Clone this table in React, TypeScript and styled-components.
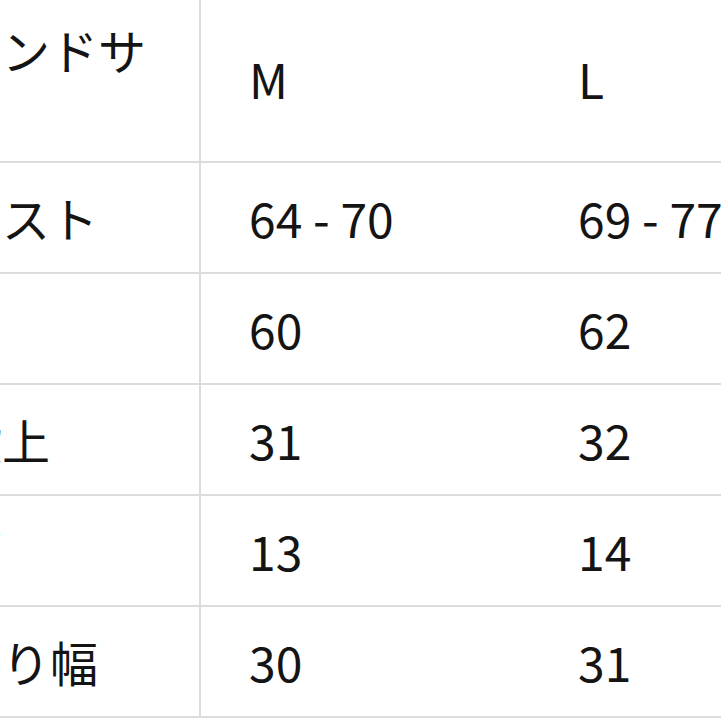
import React from 'react';
import styled, { createGlobalStyle } from 'styled-components';


const GlobalStyle = createGlobalStyle`
    html, body {
        margin: 0;
        padding: 0;
        background: #ffffff;
    }
`;

const Page = styled.div`
    width: 721px;
    height: 721px;
    overflow: hidden;
    background: #ffffff;
    font-family: "Noto Sans CJK JP", "Noto Sans", sans-serif;
    color: #141414;
`;

// the size chart is wider than the window: its first column starts off to the left
const Table = styled.div`
    display: grid;
    grid-template-columns: 322px 329px 329px;
    margin-left: -121px;
    margin-top: -5px;
    width: max-content;
`;

const Cell = styled.div<{ $label ?: boolean }>`
    font-size: 48px;
    line-height: 57px;
    padding: 26px ${p => p.$label ? '25px' : '20px'} 26px ${p => p.$label ? '27px' : '48px'};
    border-bottom: 2px solid #dcdcdc;
    border-right: ${p => p.$label ? '2px solid #dcdcdc' : 'none'};
    display: flex;
    align-items: center;
    white-space: ${p => p.$label ? 'normal' : 'nowrap'};
    word-break: break-all;
`;


interface IRow
{
    label : string;
    m : string;
    l : string;
}

const header : IRow = { label: 'ブランドサイズ', m: 'M', l: 'L' };

const rows : IRow[] = [
    { label: 'ウエスト', m: '64 - 70', l: '69 - 77' },
    { label: '総丈', m: '60', l: '62' },
    { label: '前股上', m: '31', l: '32' },
    { label: '裾幅', m: '13', l: '14' },
    { label: 'わたり幅', m: '30', l: '31' },
];


export default function App() : JSX.Element
{
    return (
        <Page>
            <GlobalStyle />
            <Table>
                {[header, ...rows].map(row => (
                    <React.Fragment key={row.label}>
                        <Cell $label>{row.label}</Cell>
                        <Cell>{row.m}</Cell>
                        <Cell>{row.l}</Cell>
                    </React.Fragment>
                ))}
            </Table>
        </Page>
    );
}
